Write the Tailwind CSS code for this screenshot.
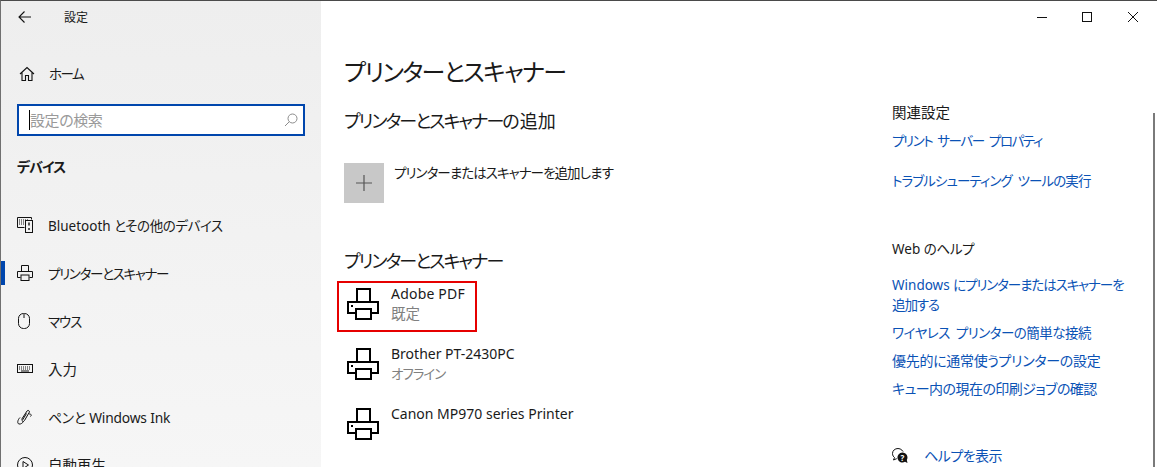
<!DOCTYPE html>
<html lang="ja">
<head>
<meta charset="utf-8">
<title>設定</title>
<script src="https://cdn.jsdelivr.net/npm/@tailwindcss/browser@4"></script>
</head>
<body class="bg-white">
<div class="relative flex h-[467px] w-[1157px] overflow-hidden border-t border-l border-t-[#4a4a4a] border-l-[#707070] bg-white font-['Noto_Sans','Noto_Sans_CJK_JP',sans-serif] text-[14px] leading-5 text-[#1a1a1a] [font-feature-settings:'palt']">

    <!-- sidebar -->
    <div class="w-[320px] shrink-0 bg-gradient-to-b from-[#eeeeee] to-[#f6f6f6]">
        <div class="flex h-[32px] items-center">
            <svg class="ml-[17px] h-[14px] w-[14px]" viewBox="0 0 14 14" fill="none" stroke="#111" stroke-width="1.1"><path d="M13 7H1M6.500 1.500 1 7l5.500 5.500"/></svg>
            <span class="mt-[1px] ml-[32px] text-[12px]">設定</span>
        </div>
        <div class="mt-[25px] flex h-[32px] items-center">
            <svg class="ml-[18px] h-[16px] w-[16px]" viewBox="0 0 16 16" fill="none" stroke="#111" stroke-width="1.1"><path d="M1 8 8 1.500 15 8M3 6.500V14.500H6.500V9.500H9.500V14.500H13V6.500"/></svg>
            <span class="ml-[14px] text-[13.5px] tracking-[-1.5px]">ホーム</span>
        </div>
        <div class="mx-[16px] mt-[14px] flex h-[32px] items-center border-2 border-[#0046ad] bg-white pr-[5px] pl-[10px]">
            <span class="h-[20px] w-px bg-black"></span>
            <span class="flex-1 text-[15px] tracking-[-0.4px] text-[#9a9a9a]">設定の検索</span>
            <svg class="h-[14px] w-[14px]" viewBox="0 0 14 14" fill="none" stroke="#8c8c8c" stroke-width="1"><circle cx="8.500" cy="5.500" r="4.500"/><path d="M5.300 8.700 1 13"/></svg>
        </div>
        <div class="mt-[21px] h-5 pl-[16px] text-[14px] font-bold tracking-[-1px]">デバイス</div>

        <nav class="mt-[24px]">
            <div class="flex h-[48px] items-center pl-[16px]">
                <svg class="h-[16px] w-[16px]" viewBox="0 0 16 16" fill="none" stroke="#111"><path d="M7.500 10.500H.5V.5h14V2.500"/><path d="M2 3h1M4 3h1M6 3h1M8 3h1M10 3h1M2 5h1M4 5h1M6 5h1M2 7h1M4 7h1M6 7h1"/><rect x="8.500" y="3.500" width="7" height="12" fill="#f2f2f2"/><rect x="11" y="5.500" width="2" height="3" fill="#555" stroke="none"/><rect x="11" y="11" width="2" height="2" fill="#555" stroke="none"/></svg>
                <span class="mt-[1px] ml-[15px] text-[13.5px]">Bluetooth <span class="tracking-[-0.4px]">とその他のデバイス</span></span>
            </div>
            <div class="relative flex h-[48px] items-center pl-[16px]">
                <span class="absolute top-[12px] left-0 h-[24px] w-[4px] bg-[#0046ad]"></span>
                <svg class="h-[16px] w-[16px]" viewBox="0 0 16 16" fill="none" stroke="#111"><path d="M4.500 6V.5h7V6"/><path d="M3.500 12.500H.5v-6h15v6h-3"/><rect x="4" y="10" width="8" height="5.500" fill="#f2f2f2"/></svg>
                <span class="mt-[1px] ml-[15px] text-[13.5px] tracking-[-1.3px]">プリンターとスキャナー</span>
            </div>
            <div class="flex h-[48px] items-center pl-[17px]">
                <svg class="h-[16px] w-[12px]" viewBox="0 0 12 16" fill="none" stroke="#111"><rect x=".5" y=".5" width="11" height="15" rx="5"/><path d="M6 1v4"/></svg>
                <span class="mt-[1px] ml-[18px] text-[13.5px] tracking-[-1px]">マウス</span>
            </div>
            <div class="flex h-[48px] items-center pl-[16px]">
                <svg class="h-[10px] w-[16px]" viewBox="0 0 16 10" fill="none" stroke="#111"><rect x=".5" y=".5" width="15" height="8"/><path d="M2 3h12M2 5h12" stroke-dasharray="1 1"/><path d="M4 7h8"/></svg>
                <span class="ml-[15px] text-[14.5px]">入力</span>
            </div>
            <div class="flex h-[48px] items-center pl-[16px]">
                <svg class="h-[16px] w-[16px]" viewBox="0 0 16 16" fill="none" stroke="#111" stroke-width="1"><path d="M4.500 10.500 10 2c.9-1.200 2.800-.3 2.400 1.100L7.500 11.500C6.500 13 5 12.800 5.200 11.500L9.500 4.500"/><path d="M12 5c2-.3 3 1.200 1.500 2.500M3 8.500C.5 11 0 14.500 2 15c2 .3 3.500-1 4.500-2.500"/></svg>
                <span class="mt-[1px] ml-[15px] text-[13.8px] tracking-[-0.2px]">ペンと Windows Ink</span>
            </div>
            <div class="flex h-[48px] items-center pl-[16px]">
                <svg class="h-[16px] w-[16px]" viewBox="0 0 16 16" fill="none" stroke="#111"><circle cx="8" cy="8" r="7.500"/><path d="M6 4.500v7l5.500-3.500z"/></svg>
                <span class="ml-[15px] text-[14.5px]">自動再生</span>
            </div>
        </nav>
    </div>

    <!-- main -->
    <div class="w-[550px] shrink-0 pl-[23px]">
        <h1 class="mt-[53px] h-[36px] text-[24px] leading-[36px] font-normal tracking-[-1.6px]">プリンターとスキャナー</h1>
        <h2 class="mt-[17px] h-[28px] text-[18px] leading-[28px] font-normal tracking-[-1.9px]">プリンターとスキャナー<span class="tracking-normal">の追加</span></h2>
        <div class="mt-[28px] flex h-[40px]">
            <div class="flex h-[40px] w-[40px] items-center justify-center bg-[#c8c8c8]">
                <svg class="h-[16px] w-[16px]" viewBox="0 0 16 16" fill="none" stroke="#555" stroke-width="1.200"><path d="M8 0v16M0 8h16"/></svg>
            </div>
            <span class="ml-[10px] text-[13.5px] tracking-[-0.95px]">プリンターまたはスキャナーを追加します</span>
        </div>
        <h2 class="mt-[44px] h-[28px] text-[18px] leading-[28px] font-normal tracking-[-1.9px]">プリンターとスキャナー</h2>

        <div class="relative mt-[5px]">
            <div class="absolute top-[1px] left-[-7px] h-[51px] w-[140px] border-2 border-[#e60000]"></div>
            <div class="flex h-[60px] pl-[3px]">
                <svg class="mt-[8px] h-[32px] w-[32px]" viewBox="0 0 32 32" fill="none" stroke="#000" stroke-width="2"><path d="M10 13V1h13v12"/><path d="M8 25H1V14h30v11h-7"/><rect x="9" y="21" width="15" height="10" fill="#fff"/><rect x="4" y="17" width="2" height="2" fill="#000" stroke="none"/></svg>
                <div class="mt-[4px] ml-[12px]">
                    <div class="tracking-[0.2px]">Adobe PDF</div>
                    <div class="-mt-[1px] text-[14.5px] text-[#808080]">既定</div>
                </div>
            </div>
            <div class="flex h-[60px] pl-[3px]">
                <svg class="mt-[8px] h-[32px] w-[32px]" viewBox="0 0 32 32" fill="none" stroke="#000" stroke-width="2"><path d="M10 13V1h13v12"/><path d="M8 25H1V14h30v11h-7"/><rect x="9" y="21" width="15" height="10" fill="#fff"/><rect x="4" y="17" width="2" height="2" fill="#000" stroke="none"/></svg>
                <div class="mt-[4px] ml-[12px]">
                    <div>Brother PT-2430PC</div>
                    <div class="text-[13.5px] tracking-[-1px] text-[#808080]">オフライン</div>
                </div>
            </div>
            <div class="flex h-[60px] pl-[3px]">
                <svg class="mt-[8px] h-[32px] w-[32px]" viewBox="0 0 32 32" fill="none" stroke="#000" stroke-width="2"><path d="M10 13V1h13v12"/><path d="M8 25H1V14h30v11h-7"/><rect x="9" y="21" width="15" height="10" fill="#fff"/><rect x="4" y="17" width="2" height="2" fill="#000" stroke="none"/></svg>
                <div class="mt-[4px] ml-[12px]">
                    <div>Canon MP970 series Printer</div>
                </div>
            </div>
        </div>
    </div>

    <!-- related -->
    <div class="flex-1 pl-[21px]">
        <div class="flex h-[32px] items-center justify-end gap-[35px] pr-[19px]">
            <svg class="h-[10px] w-[10px]" viewBox="0 0 10 10" stroke="#111"><path d="M0 5.500h10"/></svg>
            <svg class="h-[10px] w-[10px]" viewBox="0 0 10 10" fill="none" stroke="#111"><rect x=".5" y=".5" width="9" height="9"/></svg>
            <svg class="ml-[1px] h-[10px] w-[10px]" viewBox="0 0 10 10" stroke="#111"><path d="M0 0l10 10M10 0 0 10"/></svg>
        </div>
        <div class="mt-[69px] text-[14.5px]">関連設定</div>
        <a class="mt-[9px] block text-[13.5px] tracking-[-1.4px] [word-spacing:3px] text-[#0a52b5]">プリント サーバー プロパティ</a>
        <a class="mt-[20px] block text-[13.5px] tracking-[-0.9px] [word-spacing:3px] text-[#0a52b5]">トラブルシューティング ツールの実行</a>
        <div class="mt-[48px] text-[13.5px]">Web <span class="tracking-[-0.3px]">のヘルプ</span></div>
        <a class="mt-[16px] block w-[240px] text-[13.5px] text-[#0a52b5]">Windows <span class="tracking-[-1.1px]">にプリンターまたはスキャナーを追加する</span></a>
        <a class="mt-[8px] block text-[13.5px] tracking-[-0.5px] [word-spacing:3px] text-[#0a52b5]">ワイヤレス プリンターの簡単な接続</a>
        <a class="mt-[8px] block tracking-[-0.3px] text-[#0a52b5]">優先的に通常使うプリンターの設定</a>
        <a class="mt-[8px] block tracking-[-0.55px] text-[#0a52b5]">キュー内の現在の印刷ジョブの確認</a>
        <div class="mt-[47px] flex items-center">
            <svg class="h-[16px] w-[17px]" viewBox="0 0 17 16"><path d="M6 .5C3 .5.5 2.500.5 5.500.5 7.500 1.500 8.800 2.500 9.500L1.500 12 5 10.500H6C9 10.500 11.500 8 11.500 5.500S9 .5 6 .5z" fill="#fff" stroke="#111"/><circle cx="10.500" cy="9.500" r="6" fill="#fff"/><path d="M10.500 4.500a5 5 0 1 0 2.500 9.300L15.500 15 14.800 12a5 5 0 0 0-4.300-7.500z" fill="#111"/><text x="10.500" y="12.500" font-size="8" font-weight="700" text-anchor="middle" fill="#fff">?</text></svg>
            <a class="ml-[15px] tracking-[-0.5px] text-[#0a52b5]">ヘルプを表示</a>
        </div>
    </div>

    <!-- scrollbar -->
    <div class="absolute top-[112px] right-[2px] bottom-0 w-[2px] bg-[#7a7a7a]"></div>
</div>
</body>
</html>
